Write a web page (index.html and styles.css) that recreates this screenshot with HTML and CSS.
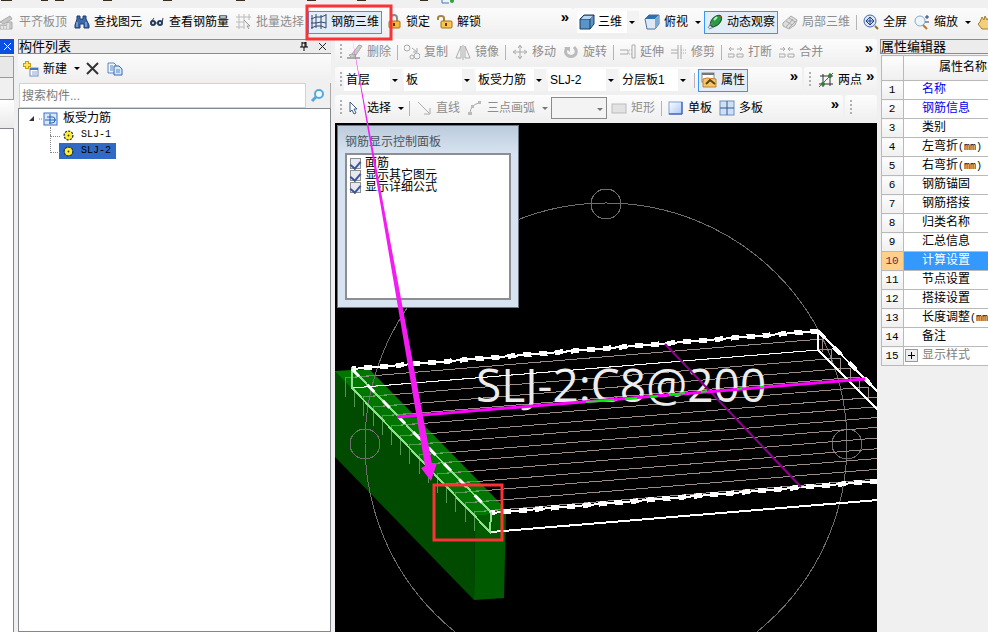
FILE: index.html
```
<!DOCTYPE html>
<html lang="zh-CN">

<head>
    <meta charset="UTF-8">
    <meta name="viewport" content="width=device-width, initial-scale=1.0">
    <title>钢筋三维</title>
    <link rel="stylesheet" href="styles.css">
</head>

<body>
    <svg class="menu-strip" aria-hidden="true">
        <path d="M1 0h11M41 0h7M55 0h9M103 0h9M163 0h9M236 0h9M307 0h9M357 0h9M420 0h8" stroke="#3a2c18" stroke-width="2" />
        <path d="M442 0v3h7" stroke="#3a7ac0" fill="none" />
        <circle cx="452" cy="1" r="2" fill="#2fa52f" />
    </svg>

    <header class="main-bars">
        <div class="bar main-left">
            <button class="tool" disabled>
                <svg class="icon" viewBox="0 0 16 16"><path d="M0 15h13V8H8v3H0zM1 8l10-6 2 3-8 5z" fill="#c8c8c8" stroke="#aaa" /><path d="M3 12v3M6 12v3M9 9v6" stroke="#fff" /></svg>
                平齐板顶</button>
            <button class="tool">
                <svg class="icon" viewBox="0 0 16 16"><path d="M3 2h3v3h3V2h3v3l3 6v3h-5v-4H6v4H1v-3l2-6z" fill="#3c69a8" stroke="#1d3c73" /><path d="M3 8v5M12 8v5" stroke="#a9c5ea" /></svg>
                查找图元</button>
            <button class="tool">
                <svg class="icon" viewBox="0 0 16 16"><g fill="none" stroke="#273c5a" stroke-width="2"><circle cx="4" cy="9" r="2" /><circle cx="11" cy="9" r="2" /><path d="M2 8l3-4M13 9l1-5M6 9h3" stroke-width="1" /></g></svg>
                查看钢筋量</button>
            <button class="tool" disabled>
                <svg class="icon" viewBox="0 0 16 16"><path d="M3 0v15M0 3h15M0 8h8M0 13h8M8 0v15M13 0v6" stroke="#bbb" fill="none" /><path d="M8 6l6 6h-3l2 3" stroke="#999" fill="#eee" /></svg>
                批量选择</button>
            <button class="tool active">
                <svg class="icon" viewBox="0 0 16 16"><path d="M1 1v14M5 0v14M10 1v14M15 0v14M0 5l5-2h5l5-2M0 9h5l5-1 5 1M0 14l5-2h5l5 2" stroke="#34496e" fill="none" /></svg>
                钢筋三维</button>
            <button class="tool">
                <svg class="icon" viewBox="0 0 16 16"><path d="M5 8V4q0-3 3-3t3 3v4" fill="none" stroke="#8a8a8a" stroke-width="2" /><rect x="3" y="7" width="11" height="7" rx="1" fill="#f4b93c" stroke="#a86f14" /><path d="M8 9v3" stroke="#5a3a00" stroke-width="2" /></svg>
                锁定</button>
            <button class="tool">
                <svg class="icon" viewBox="0 0 16 16"><path d="M7 7V4q0-2-3-2T1 4v2" fill="none" stroke="#a28545" stroke-width="2" /><rect x="4" y="7" width="11" height="7" rx="1" fill="#f8c550" stroke="#a86f14" /><path d="M9 9v3" stroke="#5a3a00" stroke-width="2" /></svg>
                解锁</button>
            <button class="more">»</button>
        </div>
        <div class="bar main-right">
            <label class="combo view-combo">
                <svg class="icon" viewBox="0 0 16 16"><path d="M1 5l4-4h10v9l-4 5H1z" fill="#5b94c9" stroke="#1c3a5f" /><path d="M1 5h10v10M11 5l4-4" fill="none" stroke="#1c3a5f" /><path d="M2 5l3-3h9l-3 3z" fill="#b8d8f2" /></svg>
                <select aria-label="视图"><option>三维</option></select>
            </label>
            <button class="tool">
                <svg class="icon" viewBox="0 0 16 16"><path d="M1 5l4-4h10v9l-4 5H3z" fill="#dce9f5" stroke="#48739e" /><path d="M1 5l4-4h10l-4 4z" fill="#2f6fae" /><path d="M11 5v10l4-5V1z" fill="#7eaad2" /></svg>
                俯视<span class="caret"></span></button>
            <button class="tool active">
                <svg class="icon" viewBox="0 0 16 16"><ellipse cx="9" cy="7" rx="7" ry="4" transform="rotate(-45 9 7)" fill="#2c9a44" stroke="#175c28" /><path d="M7 6l3-3" stroke="#b7efbc" stroke-width="2" /><path d="M1 14q2-5 5-5M2 15l5-2" stroke="#6b7f9c" fill="none" /><circle cx="13" cy="3" r="1" fill="#d43c2c" /></svg>
                动态观察</button>
            <button class="tool" disabled>
                <svg class="icon" viewBox="0 0 16 16"><path d="M1 9l8-7 6 4-2 5-6 4-6-3z" fill="#ddd" stroke="#aaa" /><path d="M4 7l6 4M7 4l6 4M4 13l7-8M7 14l7-7" stroke="#aaa" /></svg>
                局部三维</button>
            <span class="sep"></span>
            <button class="tool">
                <svg class="icon" viewBox="0 0 16 16"><circle cx="7" cy="7" r="6" fill="#d8e7fa" stroke="#4569a8" /><path d="M7 3v8M3 7h8M5 5l2-2 2 2M5 9l2 2 2-2M5 5L3 7l2 2M9 5l2 2-2 2" stroke="#203f80" fill="none" /><path d="M12 12l3 3" stroke="#9a6b2a" stroke-width="2" /></svg>
                全屏</button>
            <button class="tool">
                <svg class="icon" viewBox="0 0 16 16"><circle cx="6" cy="7" r="5" fill="#edf5fd" stroke="#89a8c6" /><path d="M9 11l4 4" stroke="#b27a36" stroke-width="2" /><path d="M11 3h4M13 1v4M11 8h4" stroke="#273c70" /></svg>
                缩放<span class="caret"></span></button>
            <button class="tool" aria-label="平移">
                <svg class="icon" viewBox="0 0 16 16"><path d="M3 8l2-5 2 3 1-4 2 4 2-3 1 5v7H5L1 10z" fill="#f3cf79" stroke="#a67c2a" /></svg>
            </button>
        </div>
    </header>

    <main class="workspace">
        <aside class="dock">
            <button class="dock-close" aria-label="关闭">
                <svg viewBox="0 0 9 9"><path d="M1 1l7 7M8 1l-7 7" stroke="#fff" /></svg>
            </button>
            <div class="dock-tab pressed"></div>
            <div class="dock-tab"></div>
            <div class="dock-head"></div>
            <div class="dock-body"></div>
        </aside>

        <section class="components">
            <div class="panel-title">
                <h2>构件列表</h2>
                <button aria-label="固定"><svg viewBox="0 0 9 9"><path d="M2 0v5M2 1h4M6 0v5M5 0v5M0 5h8M4 5v4" stroke="#000" fill="none" /></svg></button>
                <button aria-label="关闭"><svg viewBox="0 0 9 9"><path d="M1 1l7 7M8 1l-7 7" stroke="#222" /></svg></button>
            </div>
            <div class="component-tools">
                <button class="tool">
                    <svg class="icon" viewBox="0 0 16 16"><path d="M4 0v8M0 4h8" stroke="#c79a17" stroke-width="4" /><path d="M4 1v6M1 4h6" stroke="#ffe65c" stroke-width="2" /><rect x="7" y="7" width="8" height="8" fill="#fff" stroke="#6c8dc4" /><path d="M7 8h8" stroke="#4b77c0" stroke-width="2" /><path d="M9 11h5M9 13h5" stroke="#8aa5d3" /></svg>
                    新建<span class="caret"></span></button>
                <button class="tool" aria-label="删除">
                    <svg class="icon" viewBox="0 0 16 16"><path d="M2 2l11 11M13 2L2 13" stroke="#333" stroke-width="2" /></svg></button>
                <button class="tool" aria-label="复制">
                    <svg class="icon" viewBox="0 0 16 16"><path d="M1 2h6l2 2v8H1z" fill="#eef5ff" stroke="#5b86c4" /><path d="M7 5h5l3 3v6H7z" fill="#d8e8fb" stroke="#3866ae" /><path d="M3 5h3M3 7h3M3 9h3M9 9h4M9 11h4" stroke="#5b86c4" /></svg></button>
            </div>
            <div class="search">
                <input type="text" placeholder="搜索构件..." aria-label="搜索构件">
                <button aria-label="搜索"><svg class="icon" viewBox="0 0 16 16"><circle cx="9" cy="6" r="4" fill="#f2faff" stroke="#55a9df" stroke-width="2" /><path d="M6 9l-4 4" stroke="#55a9df" stroke-width="3" /></svg></button>
            </div>
            <ul class="tree">
                <li>
                    <div class="node">
                        <svg class="root-icon" viewBox="0 0 30 14"><path d="M5 4v5H0z" fill="#333" /><path d="M10 7h3" stroke="#888" stroke-dasharray="1 1" /><rect x="15" y="1" width="13" height="12" fill="#d9e9fb" stroke="#3c6fc0" /><path d="M16 8h11M21 2v10M18 5h6q2 0 2 3t-3 3h-3" stroke="#2560b5" fill="none" /></svg>
                        板受力筋
                    </div>
                    <ul>
                        <li><a href="#" class="node leaf"><svg class="gear" viewBox="0 0 12 12"><circle cx="6" cy="6" r="4" fill="#ffe81a" stroke="#333" stroke-width="3" stroke-dasharray="2 1" /><circle cx="6" cy="6" r="4" fill="#ffef2e" /><circle cx="6" cy="6" r="1" fill="#333" /></svg>SLJ-1</a></li>
                        <li><a href="#" class="node leaf selected"><svg class="gear" viewBox="0 0 12 12"><circle cx="6" cy="6" r="4" fill="#ffe81a" stroke="#333" stroke-width="3" stroke-dasharray="2 1" /><circle cx="6" cy="6" r="4" fill="#ffef2e" /><circle cx="6" cy="6" r="1" fill="#333" /></svg>SLJ-2</a></li>
                    </ul>
                </li>
            </ul>
        </section>

        <section class="editor">
            <div class="bar">
                <span class="grip"></span>
                <button class="tool" disabled><svg class="icon" viewBox="0 0 16 16"><path d="M5 10l7-9 3 1-6 9zM2 11l3-1 4 2-4 2z" fill="#ccc" stroke="#aaa" /><path d="M0 14h13" stroke="#aaa" stroke-width="2" /></svg>删除</button>
                <span class="sep"></span>
                <button class="tool" disabled><svg class="icon" viewBox="0 0 16 16"><g fill="none" stroke="#aaa"><circle cx="3" cy="4" r="3" /><circle cx="8" cy="13" r="2" /><circle cx="13" cy="12" r="3" /><path d="M8 4l5 4M13 4v4H9" /></g></svg>复制</button>
                <button class="tool" disabled><svg class="icon" viewBox="0 0 16 16"><path d="M6 2v12H1zM10 2v12h5zM8 1v15" stroke="#aaa" fill="none" /></svg>镜像</button>
                <span class="sep"></span>
                <button class="tool" disabled><svg class="icon" viewBox="0 0 16 16"><path d="M8 2v12M2 8h12M6 4l2-3 2 3M6 12l2 3 2-3M4 6L1 8l3 2M12 6l3 2-3 2" stroke="#aaa" fill="none" /></svg>移动</button>
                <button class="tool" disabled><svg class="icon" viewBox="0 0 16 16"><path d="M4 4q-3 4 0 7 4 3 8 0 3-4-1-8" stroke="#bbb" stroke-width="3" fill="none" /><path d="M1 3h6v5z" fill="#bbb" /></svg>旋转</button>
                <span class="sep"></span>
                <button class="tool" disabled><svg class="icon" viewBox="0 0 16 16"><path d="M12 1v13h3V1zM0 6h8M0 10h8M8 6v4" stroke="#aaa" fill="none" /><path d="M9 6h3M9 10h3" stroke="#aaa" stroke-dasharray="1 1" /></svg>延伸</button>
                <button class="tool" disabled><svg class="icon" viewBox="0 0 16 16"><path d="M7 1v14M10 1v14M0 6h7M0 9h7" stroke="#aaa" fill="none" /><path d="M10 6h6M10 9h6" stroke="#aaa" stroke-dasharray="1 1" /></svg>修剪</button>
                <span class="sep"></span>
                <button class="tool" disabled><svg class="icon" viewBox="0 0 16 16"><path d="M0 13v-3h6v3zM9 13v-3h6v3zM1 5h5M9 5h5M3 3L1 5l2 2M12 3l2 2-2 2" stroke="#aaa" fill="none" /></svg>打断</button>
                <button class="tool" disabled><svg class="icon" viewBox="0 0 16 16"><path d="M0 13v-3h6v3zM9 13v-3h6v3zM1 5h5M9 5h5M4 3l2 2-2 2M11 3L9 5l2 2" stroke="#aaa" fill="none" /></svg>合并</button>
                <button class="more">»</button>
            </div>
            <div class="bar-row">
                <div class="bar">
                    <span class="grip"></span>
                    <label class="combo short"><select aria-label="楼层"><option>首层</option></select></label>
                    <label class="combo"><select aria-label="构件类型"><option>板</option></select></label>
                    <label class="combo"><select aria-label="构件"><option>板受力筋</option></select></label>
                    <label class="combo"><select aria-label="名称"><option>SLJ-2</option></select></label>
                    <label class="combo"><select aria-label="分层"><option>分层板1</option></select></label>
                    <span class="sep"></span>
                    <button class="tool active"><svg class="icon" viewBox="0 0 16 16"><rect x="1" y="1" width="12" height="9" fill="#fff" stroke="#888" /><path d="M1 2h12" stroke="#777" stroke-width="2" /><path d="M2 15V7l4-1 9 1v8z" fill="#f6c56b" stroke="#c4832b" /><path d="M5 12l4-4 5 4" stroke="#5e4013" stroke-width="2" fill="none" /></svg>属性</button>
                    <button class="more">»</button>
                </div>
                <div class="bar points-bar">
                    <span class="grip"></span>
                    <button class="tool"><svg class="icon" viewBox="0 0 16 16"><path d="M5 2v13M12 1v13M1 12h14M2 4h13" stroke="#333" /><path d="M1 15L15 1" stroke="#c03a2c" /><circle cx="5" cy="12" r="2" fill="#2e7d32" /><circle cx="12" cy="4" r="2" fill="#2e7d32" /></svg>两点</button>
                    <button class="more">»</button>
                </div>
            </div>
            <div class="bar-row">
                <div class="bar">
                    <span class="grip"></span>
                    <button class="tool"><svg class="icon" viewBox="0 0 16 16"><path d="M3 2v10l2-2 2 4 2-1-2-4h3z" fill="#fff" stroke="#3c5a86" /></svg>选择<span class="caret"></span></button>
                    <span class="sep"></span>
                    <button class="tool" disabled><svg class="icon" viewBox="0 0 16 16"><path d="M2 2l11 11M14 8v6H8" stroke="#aaa" fill="none" /></svg>直线</button>
                    <button class="tool" disabled><svg class="icon" viewBox="0 0 16 16"><path d="M3 14Q3 5 12 3" stroke="#aaa" fill="none" /><path d="M1 12h4v3H1zM4 5h3v3H4zM11 1h3v3h-3z" fill="#bbb" /></svg>三点画弧<span class="caret"></span></button>
                    <label class="combo boxed"><select aria-label="画弧半径" disabled><option></option></select></label>
                    <button class="tool" disabled><svg class="icon" viewBox="0 0 16 16"><rect x="1" y="4" width="14" height="9" fill="#e2e2e2" stroke="#bbb" /></svg>矩形</button>
                    <span class="sep"></span>
                    <button class="tool"><svg class="icon" viewBox="0 0 16 16"><defs><linearGradient id="sheet" x1="0" y1="0" x2="1" y2="1"><stop offset="0" stop-color="#fff" /><stop offset="1" stop-color="#a9c6f5" /></linearGradient></defs><rect x="1" y="2" width="13" height="12" fill="url(#sheet)" stroke="#7f9fd6" /><path d="M1 14h13V2" stroke="#1c47b4" fill="none" /></svg>单板</button>
                    <button class="tool"><svg class="icon" viewBox="0 0 16 16"><rect x="1" y="1" width="14" height="14" fill="#cfe0f4" stroke="#6d90bd" /><path d="M8 1v14M1 8h14" stroke="#31588c" /></svg>多板</button>
                    <button class="more">»</button>
                </div>
                <div class="bar empty-bar"><span class="grip"></span></div>
            </div>

            <div class="viewport">
                <svg class="scene" viewBox="335 123 542 509" preserveAspectRatio="xMinYMin slice">
                    <defs>
                        <g id="bar" fill="none">
                            <path d="M345 378l477-39" stroke="#9b8d86" />
                            <path d="M822 339v13" stroke="#9b8d86" />
                            <path d="M345 397v-19l31-3" stroke="#4f9a50" />
                        </g>
                    </defs>
                    <!-- beam -->
                    <path d="M335 371h14l126 144-1 85-139-143z" fill="#004b00" />
                    <path d="M335 371l34-2 131 134 6 10-31 3z" fill="#007600" />
                    <path d="M475 516l31-4-2 86-30 2z" fill="#005a00" />

                    <!-- trackball -->
                    <g fill="none" stroke="#6e6e6e" shape-rendering="crispEdges">
                        <circle cx="606" cy="444" r="241" />
                        <circle cx="606" cy="204" r="15" />
                        <circle cx="365" cy="444" r="15" />
                        <circle cx="847" cy="444" r="15" />
                    </g>

                    <g shape-rendering="crispEdges">
                        <use href="#bar" />
                        <use href="#bar" x="9" y="10" />
                        <use href="#bar" x="18" y="19" />
                        <use href="#bar" x="28" y="29" />
                        <use href="#bar" x="37" y="38" />
                        <use href="#bar" x="46" y="48" />
                        <use href="#bar" x="55" y="58" />
                        <use href="#bar" x="64" y="67" />
                        <use href="#bar" x="74" y="77" />
                        <use href="#bar" x="83" y="86" />
                        <use href="#bar" x="92" y="96" />
                        <use href="#bar" x="101" y="106" />
                        <use href="#bar" x="110" y="115" />
                        <use href="#bar" x="120" y="125" />
                        <use href="#bar" x="129" y="134" />
                    </g>

                    <text class="rebar-label" x="476" y="402">SLJ-2:C8@200</text>

                    <!-- slab outline -->
                    <g fill="none" stroke="#fff" shape-rendering="crispEdges">
                        <path d="M352 388l466-38" />
                        <path d="M818 331v19l60 60M352 369l466-38M818 331l60 61" stroke-width="2" />
                        <path d="M491 513l387-32M491 532l387-32" stroke-width="2" />
                        <path d="M352 369l466-38M491 513l387-32" stroke-width="5" stroke-dasharray="8 8" stroke-dashoffset="4" />
                        <path d="M818 331l60 61" stroke-width="4" stroke-dasharray="10 12" />
                    </g>
                    <path d="M352 369v19l138 144 1-20z" fill="none" stroke="#8fe08f" stroke-width="2" shape-rendering="crispEdges" />
                    <path d="M352 369l139 143" stroke="#fff" stroke-width="3" stroke-dasharray="10 12" />
                    <path d="M665 344l136 143" stroke="#8e008e" stroke-width="2" />
                    <path d="M397 417l468-38" stroke="#ff00ff" stroke-width="3" />
                    <path d="M586 402l28-2M625 399l12-1M650 397l8-1M669 395l16-2M701 392l6-1M737 389l5-1M760 387h4" stroke="#00f000" stroke-width="2" />
                </svg>

                <form class="display-panel">
                    <h3>钢筋显示控制面板</h3>
                    <div class="options">
                        <label><input type="checkbox" checked>面筋</label>
                        <label><input type="checkbox" checked>显示其它图元</label>
                        <label><input type="checkbox" checked>显示详细公式</label>
                    </div>
                </form>
            </div>
        </section>

        <aside class="properties">
            <div class="panel-title"><h2>属性编辑器</h2></div>
            <table>
                <thead>
                    <tr><th></th><th>属性名称</th></tr>
                </thead>
                <tbody>
                    <tr><th>1</th><td class="key">名称</td></tr>
                    <tr><th>2</th><td class="key">钢筋信息</td></tr>
                    <tr><th>3</th><td>类别</td></tr>
                    <tr><th>4</th><td>左弯折<span class="unit">(mm)</span></td></tr>
                    <tr><th>5</th><td>右弯折<span class="unit">(mm)</span></td></tr>
                    <tr><th>6</th><td>钢筋锚固</td></tr>
                    <tr><th>7</th><td>钢筋搭接</td></tr>
                    <tr><th>8</th><td>归类名称</td></tr>
                    <tr><th>9</th><td>汇总信息</td></tr>
                    <tr class="current"><th>10</th><td>计算设置</td></tr>
                    <tr><th>11</th><td>节点设置</td></tr>
                    <tr><th>12</th><td>搭接设置</td></tr>
                    <tr><th>13</th><td>长度调整<span class="unit">(mm)</span></td></tr>
                    <tr><th>14</th><td>备注</td></tr>
                    <tr class="group"><th>15</th><td><button class="expand" aria-label="展开"><svg viewBox="0 0 11 11"><path d="M2 5h7v1H2zM5 2h1v7H5z" /></svg></button>显示样式</td></tr>
                </tbody>
            </table>
        </aside>
    </main>

    <svg class="marks" aria-hidden="true">
        <path d="M352 37l73 429-4 2 10 13 6-18-5 1z" fill="#f31cf3" />
        <rect x="307" y="6" width="84" height="33" fill="none" stroke="#fb3336" stroke-width="3" />
        <rect x="434" y="485" width="68" height="55" fill="none" stroke="#fb3336" stroke-width="3" />
    </svg>
</body>

</html>
```
FILE: styles.css
```
* {
    margin: 0;
    padding: 0;
    box-sizing: border-box;
}

body {
    position: relative;
    display: flex;
    flex-direction: column;
    min-height: 100vh;
    overflow: hidden;
    font-family: "Liberation Sans", "Noto Sans CJK SC", sans-serif;
    font-size: 12px;
    line-height: 16px;
    color: #000;
    background: #f0f0f0;
}

button,
input,
select {
    font: inherit;
    color: inherit;
    background: none;
    border: none;
}

ul {
    list-style: none;
}

svg {
    display: block;
    flex-shrink: 0;
}

.menu-strip {
    width: 100%;
    height: 8px;
}

/* Toolbars */
.main-bars {
    display: grid;
    grid-template-columns: minmax(0, 58fr) minmax(0, 42fr);
    height: 31px;
}

.bar {
    display: flex;
    align-items: center;
    gap: 1px;
    flex: 1;
    min-width: 0;
    height: 26px;
    overflow: hidden;
    white-space: nowrap;
    background: linear-gradient(#fcfcfc, #efefef);
    border-radius: 3px;
}

.main-bars .bar {
    height: 28px;
}

.main-left > :first-child {
    margin-left: -4px;
}

.main-right {
    padding-left: 4px;
}

.tool {
    display: flex;
    align-items: center;
    flex-shrink: 0;
    gap: 4px;
    height: 23px;
    padding: 0 2px;
    border: 1px solid transparent;
}

.tool:disabled {
    color: #8d8d8d;
}

.tool.active {
    border-color: #3399ff;
    background: #e3edf8;
}

.icon {
    width: 16px;
    height: 16px;
}

.caret {
    margin: 0 -1px 0 3px;
    border: 3px solid transparent;
    border-top-color: #000;
    border-bottom: 0;
}

.tool:disabled .caret {
    border-top-color: #777;
}

.sep {
    flex-shrink: 0;
    width: 1px;
    height: 15px;
    margin: 0 2px;
    background: #b5b5b5;
}

.more {
    align-self: flex-start;
    flex-shrink: 0;
    margin-left: auto;
    padding-right: 4px;
    font-size: 15px;
    font-weight: bold;
    line-height: 18px;
}

.grip {
    flex-shrink: 0;
    width: 2px;
    height: 16px;
    margin: 0 1px 0 5px;
    background: repeating-linear-gradient(#b0b0b0 0 2px, transparent 2px 4px);
}

.bar-row {
    display: flex;
    gap: 2px;
}

.points-bar {
    flex: 0 0 73px;
}

.points-bar .tool {
    margin-left: 2px;
}

.empty-bar {
    flex: 0 0 32px;
}

.combo {
    position: relative;
    display: flex;
    align-items: center;
    flex-shrink: 0;
    width: 70px;
    height: 22px;
    margin-right: 1px;
    padding-left: 2px;
    background: linear-gradient(90deg, #fff calc(100% - 12px), #f3f3f3 0);
}

.combo select {
    flex: 1;
    min-width: 0;
    appearance: none;
    outline: none;
}

.combo::after {
    content: "";
    position: absolute;
    right: 4px;
    top: 10px;
    border: 3px solid transparent;
    border-top-color: #000;
    border-bottom: 0;
    pointer-events: none;
}

.combo.short {
    width: 58px;
}

.combo.view-combo {
    width: 62px;
    gap: 3px;
}

.combo.boxed {
    width: 56px;
    margin: 0;
    border: 1px solid #8a8a8a;
    background: #f3f3f3;
}

.combo.boxed::after {
    border-top-color: #777;
    right: 3px;
}

/* Workspace */
.workspace {
    display: grid;
    grid-template-columns: 14px 313px minmax(0, 1fr) 108px;
    gap: 4px;
    flex: 1;
}

.dock {
    display: flex;
    flex-direction: column;
}

.dock-close {
    display: grid;
    place-items: center;
    height: 15px;
    background: #0a4fe0;
}

.dock-close svg,
.panel-title svg {
    width: 9px;
    height: 9px;
}

.dock-tab {
    height: 22px;
    border: solid #9a9a9a;
    border-width: 0 1px 1px 0;
}

.dock-tab.pressed {
    margin-top: 2px;
    border-top-width: 1px;
    background: #e8e8e8;
}

.dock-head {
    height: 28px;
    background: linear-gradient(#fff, #e9e9e9);
}

.dock-body {
    flex: 1;
    border: solid #828790;
    border-width: 1px 1px 0 0;
    background: #fff;
}

.panel-title {
    display: flex;
    align-items: center;
    gap: 9px;
    height: 15px;
    padding-right: 4px;
    border: solid #8c8c8c;
    border-width: 1px 0 1px 1px;
    background: #ececec;
    white-space: nowrap;
}

.panel-title h2 {
    flex: 1;
    font-size: 13px;
    font-weight: normal;
    line-height: 13px;
}

.components {
    display: flex;
    flex-direction: column;
}

.component-tools {
    display: flex;
    align-items: center;
    height: 29px;
    padding-left: 2px;
    background: linear-gradient(#fbfbfb, #efefef);
}

.search {
    display: flex;
    height: 25px;
    border-right: 1px solid #aaa;
}

.search input {
    flex: 1;
    min-width: 0;
    margin-left: 1px;
    padding-left: 2px;
    border: 1px solid #bcd8ee;
    background: #fff;
}

.search input::placeholder {
    color: #7a7a7a;
}

.search button {
    padding: 0 4px;
}

.tree {
    flex: 1;
    padding: 2px 0 0 10px;
    border: 1px solid #828790;
    background: #fff;
    font-family: "Liberation Mono", "Noto Sans CJK SC", monospace;
}

.tree ul {
    margin-left: 21px;
}

.tree ul li {
    position: relative;
    padding-left: 9px;
}

.tree ul li::before {
    content: "";
    position: absolute;
    left: 0;
    top: 0;
    width: 9px;
    height: 9px;
    border: dotted #888;
    border-width: 0 0 1px 1px;
}

.tree ul li + li::before {
    top: -8px;
    height: 17px;
}

.node {
    display: flex;
    align-items: center;
    gap: 4px;
    height: 16px;
}

.leaf {
    gap: 7px;
    width: 57px;
    padding-left: 4px;
    color: #000;
    font-size: 10px;
    text-decoration: none;
}

.leaf.selected {
    background: #316ac5;
}

.root-icon {
    width: 30px;
    height: 14px;
}

.gear {
    width: 11px;
    height: 11px;
}

.editor {
    display: flex;
    flex-direction: column;
    gap: 2px;
    margin-right: -1px;
}

.editor > .bar {
    flex: none;
}

.viewport {
    position: relative;
    flex: 1;
    background: #000;
}

.scene {
    position: absolute;
    width: 100%;
    height: 100%;
}

.rebar-label {
    font-family: "Open Sans", sans-serif;
    font-size: 46px;
    fill: #ececec;
}

.display-panel {
    position: absolute;
    left: 2px;
    top: 2px;
    width: 182px;
    height: 183px;
    padding: 8px 7px;
    border: 1px solid #6b7682;
    background: linear-gradient(#bccbdd, #d7e3f0 28px);
}

.display-panel h3 {
    margin-bottom: 3px;
    font-size: 12px;
    font-weight: normal;
    color: #4a5560;
}

.options {
    height: 147px;
    padding: 2px 3px;
    border: 2px solid #8b8f94;
    background: #fff;
}

.options label {
    display: flex;
    align-items: center;
    gap: 4px;
    height: 12px;
}

.options input {
    appearance: none;
    display: grid;
    place-items: center;
    width: 11px;
    height: 11px;
    border: 1px solid #8e8f8f;
    background: #e6eaf0;
}

.options input:checked::after {
    content: "";
    width: 5px;
    height: 8px;
    border: solid #3b55a0;
    border-width: 0 2px 2px 0;
    transform: rotate(40deg);
}

/* Property grid */
.properties {
    overflow: hidden;
}

.properties table {
    width: 142px;
    margin: 1px 0 0 1px;
    table-layout: fixed;
    border-collapse: collapse;
    font-family: "Liberation Mono", "Noto Sans CJK SC", monospace;
}

.properties tr {
    height: 19px;
}

.properties thead tr {
    height: 25px;
}

.properties th,
.properties td {
    border: 1px solid #b9b9b9;
    font-weight: normal;
    white-space: nowrap;
}

.properties th {
    background: linear-gradient(#fdfdfd, #efefef);
}

.properties th:first-child {
    width: 22px;
    padding-right: 1px;
    font-size: 11px;
}

.properties td {
    padding-left: 18px;
    background: #fff;
}

.properties .key {
    color: #0000f0;
}

.properties .unit {
    font-size: 10px;
}

.properties .current th {
    color: #6b2060;
    background: #ffd08a;
}

.properties .current td {
    color: #fff;
    background: #3399ff;
}

.properties .group td {
    padding-left: 1px;
    color: #808080;
}

.expand {
    display: inline-block;
    width: 13px;
    height: 13px;
    margin-right: 4px;
    border: 1px solid #999;
    background: #eee;
    vertical-align: middle;
}

.expand svg {
    width: 11px;
    height: 11px;
}

/* Marks drawn over the window */
.marks {
    position: absolute;
    left: 0;
    top: 0;
    width: 100%;
    height: 100%;
    pointer-events: none;
}
```
